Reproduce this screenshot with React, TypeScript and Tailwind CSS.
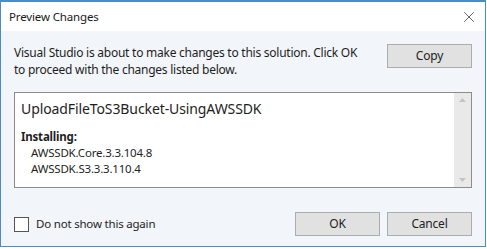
import { X } from "lucide-react";

const font = { fontFamily: '"Noto Sans", "Open Sans", sans-serif' };

function Btn({ label, className = "" }: { label: string; className?: string }) {
  return (
    <button
      className={`h-[24px] w-[85px] border border-[#adadad] bg-[#e1e1e1] text-[12px] tracking-[-0.2px] text-[#222] leading-none ${className}`}
    >
      {label}
    </button>
  );
}

export default function App() {
  return (
    <div className="w-[487px] h-[249px] bg-white" style={font}>
      <div className="h-[247px] w-[486px] border border-t-2 border-[#4a8ccb] flex flex-col">
        {/* title bar */}
        <div className="h-[29px] bg-white flex items-center justify-between pl-[8px] pr-[7px]">
          <span className="text-[11.5px] tracking-[-0.15px] text-[#1a1a1a]">Preview Changes</span>
          <X size={18} strokeWidth={1} className="text-[#333]" />
        </div>

        {/* body */}
        <div className="flex-1 bg-[#f2f5f9] px-[13px] pt-[12px] flex flex-col">
          <div className="flex justify-between items-start">
            <p className="text-[12px] tracking-[-0.25px] leading-[17px] text-[#1e1e1e] mt-[1px] w-[350px]">
              Visual Studio is about to make changes to this solution. Click OK to proceed with the changes listed below.
            </p>
            <Btn label="Copy" className="mt-[1px]" />
          </div>

          <div className="mt-[14px] h-[96px] border border-[#8c8c8c] bg-white flex">
            <div className="flex-1 pl-[6px] pt-[6px] text-[#1e1e1e]">
              <div className="text-[14px] tracking-[-0.1px] leading-[20px]">UploadFileToS3Bucket-UsingAWSSDK</div>
              <div className="mt-[10px] text-[11.5px] tracking-[-0.2px] leading-[16px] font-bold">Installing:</div>
              <div className="pl-[10px] text-[11.5px] tracking-[-0.2px] leading-[16px]">AWSSDK.Core.3.3.104.8</div>
              <div className="pl-[10px] text-[11.5px] tracking-[-0.2px] leading-[16px]">AWSSDK.S3.3.3.110.4</div>
            </div>
            <div className="w-[17px] bg-[#e9e9e9] flex flex-col justify-between items-center py-[5px]">
              <svg width="7" height="4" viewBox="0 0 7 4">
                <path d="M0 4 L3.5 0 L7 4 Z" fill="#c4c4c4" />
              </svg>
              <svg width="7" height="4" viewBox="0 0 7 4">
                <path d="M0 0 L3.5 4 L7 0 Z" fill="#c4c4c4" />
              </svg>
            </div>
          </div>

          <div className="mt-[24px] flex items-center justify-between">
            <label className="flex items-center gap-[7px]">
              <span className="h-[15px] w-[15px] border border-[#555] bg-white" />
              <span className="text-[11.5px] tracking-[-0.2px] text-[#1e1e1e]">Do not show this again</span>
            </label>
            <div className="flex gap-[7px]">
              <Btn label="OK" />
              <Btn label="Cancel" />
            </div>
          </div>
        </div>
      </div>
    </div>
  );
}
